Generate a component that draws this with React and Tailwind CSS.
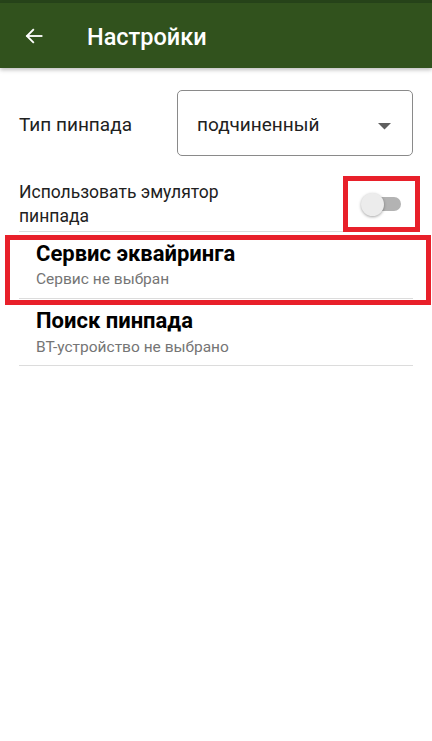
import React from 'react';

const App = () => {
  return (
    <div className="w-[432px] h-[741px] bg-white relative overflow-hidden" style={{ fontFamily: 'Roboto, "Noto Sans", sans-serif' }}>
      <div className="h-[3px] bg-[#27441a]" />
      <div className="h-[65px] bg-[#31521d] flex items-center shadow-[0_2px_4px_rgba(0,0,0,0.25)] relative z-10">
        <svg width="20" height="20" viewBox="0 0 24 24" className="ml-[24px]" fill="none" stroke="white" strokeWidth="2.2" strokeLinecap="square">
          <path d="M21 12H4" />
          <path d="M11 4.5L3.5 12L11 19.5" />
        </svg>
        <h1 className="ml-[43px] mt-[4px] text-white text-[23.5px] font-medium">Настройки</h1>
      </div>

      <div className="px-[19px]">
        <div className="flex items-center mt-[22px]">
          <span className="w-[158px] text-[19px] text-[#212121] pt-[5px]">Тип пинпада</span>
          <div className="flex-1 h-[66px] border border-[#8a8a8a] rounded-[5px] flex items-center pl-[19px] pr-[21px]">
            <span className="flex-1 text-[19px] text-[#212121] pt-[5px]">подчиненный</span>
            <svg width="13" height="7" viewBox="0 0 13 7" className="mt-[6px]">
              <path d="M0 0H13L6.5 6.5Z" fill="#5f5f5f" />
            </svg>
          </div>
        </div>

        <div className="flex items-center mt-[24px] pb-[3px] border-b border-[#dcdcdc]">
          <span className="flex-1 text-[17.5px] leading-[24px] text-[#212121]">Использовать эмулятор<br />пинпада</span>
          <div className="relative w-[40px] h-[24px] mr-[12px]">
            <div className="absolute right-0 top-[5px] w-[34px] h-[14px] rounded-full bg-[#b3b3b3]" />
            <div className="absolute left-0 top-[1px] w-[23px] h-[23px] rounded-full bg-[#ececec] shadow-[0_1px_3px_rgba(0,0,0,0.35)]" />
          </div>
        </div>

        <div className="pl-[17px] pt-[8px] pb-[9px] border-b border-[#dcdcdc]">
          <div className="text-[22px] font-bold text-black leading-[28px]">Сервис эквайринга</div>
          <div className="text-[15.5px] text-[#757575] leading-[20px] mt-[1px]">Сервис не выбран</div>
        </div>

        <div className="pl-[17px] pt-[8px] pb-[8px] border-b border-[#dcdcdc]">
          <div className="text-[22px] font-bold text-black leading-[28px]">Поиск пинпада</div>
          <div className="text-[15.5px] text-[#757575] leading-[20px] mt-[2px]">ВТ-устройство не выбрано</div>
        </div>
      </div>

      <div className="absolute left-[343px] top-[176px] w-[77px] h-[56px] border-[5px] border-[#e8202a]" />
      <div className="absolute left-[5px] top-[235px] w-[426px] h-[70px] border-[5px] border-[#e8202a]" />
    </div>
  );
};

export default App;
